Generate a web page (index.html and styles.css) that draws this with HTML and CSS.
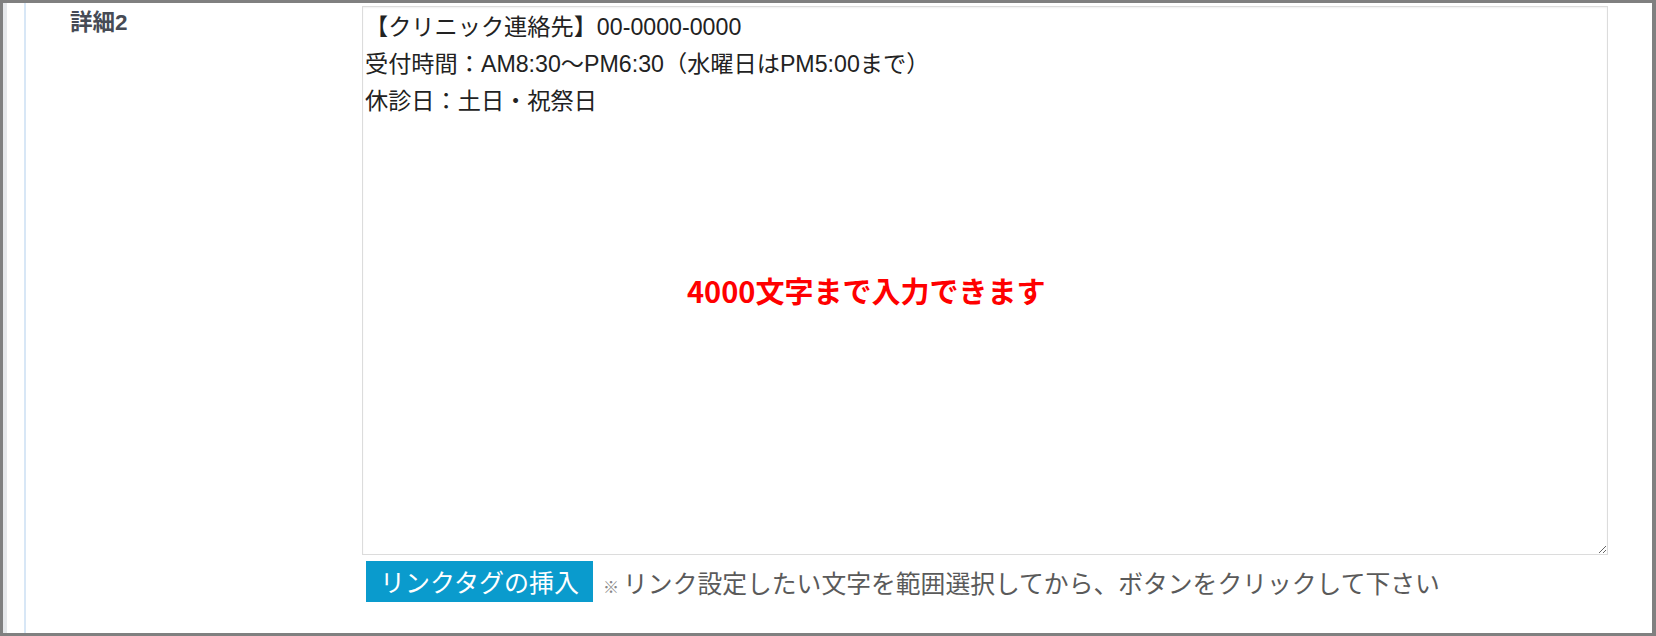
FILE: index.html
```html
<!DOCTYPE html>
<html>
  <head>
    <meta charset="utf-8"/>
    <title>詳細2</title>
    <link rel="stylesheet" href="styles.css">
  </head>
  <body>
    <div class="frame">
      <div class="rail"></div>
      <div class="row">
        <div class="label">詳細2</div>
        <div class="field">
          <div class="editor">
            <textarea class="detail">【クリニック連絡先】00-0000-0000
受付時間：AM8:30～PM6:30（水曜日はPM5:00まで）
休診日：土日・祝祭日</textarea>
            <span class="limit">4000文字まで入力できます</span>
          </div>
          <div class="actions">
            <button class="link-btn" type="button">リンクタグの挿入</button>
            <span class="hint"><small>※</small>リンク設定したい文字を範囲選択してから、ボタンをクリックして下さい</span>
          </div>
        </div>
      </div>
    </div>
  </body>
</html>
```
FILE: styles.css
```css
* {
  margin: 0;
  padding: 0;
  box-sizing: border-box;
}

html, body {
  width: 1656px;
  height: 636px;
  background: #fff;
  font-family: 'Liberation Sans', 'Noto Sans CJK JP', sans-serif;
}

.frame {
  display: flex;
  height: 636px;
  border: 3px solid #808080;
  border-right-width: 4px;
}

.rail {
  width: 4px;
  background: #e6e8eb;
}

.row {
  flex: 1;
  display: grid;
  grid-template-columns: 336px 1246px;
  margin-left: 17px;
  padding-top: 3px;
  border-left: 2px solid #d8e7f6;
}

.label {
  padding: 3px 0 0 44px;
  font-size: 22.5px;
  line-height: 28px;
  font-weight: bold;
  color: #464b55;
}

.editor {
  position: relative;
}

.detail {
  display: block;
  width: 1246px;
  height: 549px;
  padding: 2px 2px;
  border: 1px solid #dcdcdc;
  box-shadow: inset 0 1px 2px rgba(0, 0, 0, 0.06);
  font-family: 'Liberation Sans', 'Noto Sans CJK JP', sans-serif;
  font-size: 23.2px;
  line-height: 37px;
  color: #222;
  resize: both;
}

.limit {
  position: absolute;
  left: 325px;
  top: 267px;
  font-family: 'Noto Sans CJK JP', sans-serif;
  font-size: 29px;
  line-height: 34px;
  font-weight: bold;
  color: #ff0000;
}

.actions {
  display: flex;
  align-items: center;
  margin-top: 6px;
  padding-left: 4px;
}

.link-btn {
  height: 41px;
  padding: 0 14px;
  border: none;
  background: #0a9bcd;
  color: #fff;
  font-family: 'Noto Sans CJK JP', sans-serif;
  font-size: 25px;
  line-height: 41px;
}

.hint {
  margin-left: 10px;
  font-family: 'Noto Sans CJK JP', sans-serif;
  font-size: 24.8px;
  color: #5a5a5a;
}

.hint small {
  font-size: 16px;
  color: #888;
  margin-right: 4px;
}
```
